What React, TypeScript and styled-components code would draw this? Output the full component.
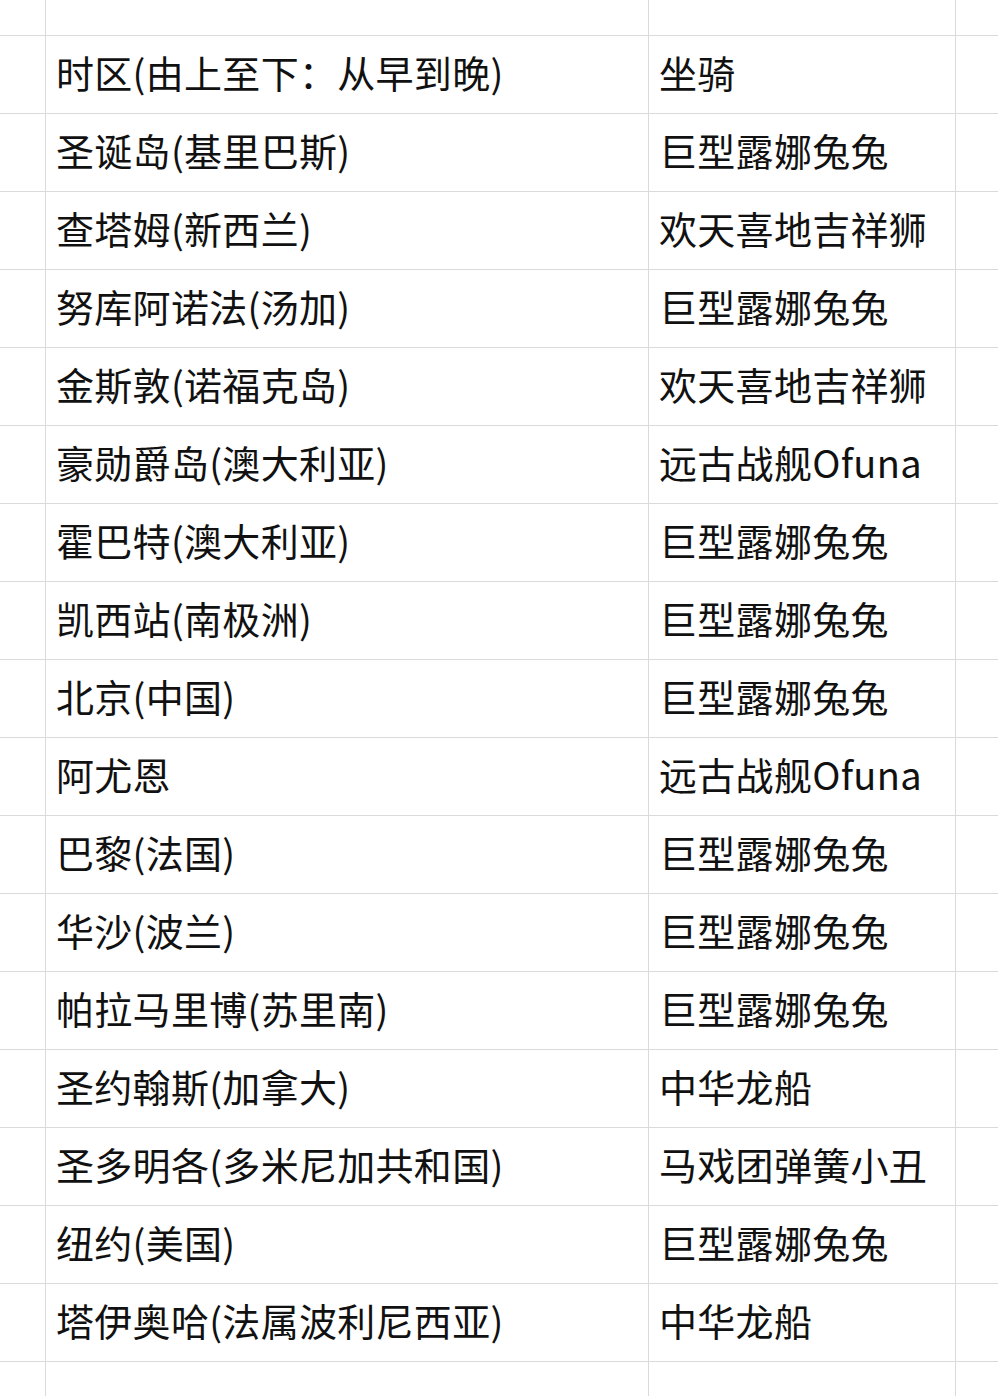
import React from "react";
import styled, { createGlobalStyle } from "styled-components";

const Global = createGlobalStyle`
  html, body { margin: 0; padding: 0; background: #ffffff; }
  body { font-family: "Noto Sans CJK SC", "Noto Sans", sans-serif; }
`;

const Sheet = styled.div`
  display: grid;
  grid-template-columns: 46px 603px 307px 42px;
  grid-template-rows: 36px repeat(17, 78px) 34px;
  width: 998px;
  height: 1397px;
  overflow: hidden;
  background: #ffffff;
`;

const Cell = styled.div<{ $noRight?: boolean; $noBottom?: boolean }>`
  box-sizing: border-box;
  border-right: ${(p) => (p.$noRight ? "none" : "1px solid #dadada")};
  border-bottom: ${(p) => (p.$noBottom ? "none" : "1px solid #dadada")};
  display: flex;
  align-items: center;
  padding-left: 10px;
  padding-bottom: 5px;
  font-size: 38px;
  letter-spacing: 0.3px;
  color: #111111;
  white-space: nowrap;
  overflow: hidden;
  line-height: 1;
`;

const rows: [string, string][] = [
  ["时区(由上至下：从早到晚)", "坐骑"],
  ["圣诞岛(基里巴斯)", "巨型露娜兔兔"],
  ["查塔姆(新西兰)", "欢天喜地吉祥狮"],
  ["努库阿诺法(汤加)", "巨型露娜兔兔"],
  ["金斯敦(诺福克岛)", "欢天喜地吉祥狮"],
  ["豪勋爵岛(澳大利亚)", "远古战舰Ofuna"],
  ["霍巴特(澳大利亚)", "巨型露娜兔兔"],
  ["凯西站(南极洲)", "巨型露娜兔兔"],
  ["北京(中国)", "巨型露娜兔兔"],
  ["阿尤恩", "远古战舰Ofuna"],
  ["巴黎(法国)", "巨型露娜兔兔"],
  ["华沙(波兰)", "巨型露娜兔兔"],
  ["帕拉马里博(苏里南)", "巨型露娜兔兔"],
  ["圣约翰斯(加拿大)", "中华龙船"],
  ["圣多明各(多米尼加共和国)", "马戏团弹簧小丑"],
  ["纽约(美国)", "巨型露娜兔兔"],
  ["塔伊奥哈(法属波利尼西亚)", "中华龙船"],
];

const allRows: [string, string][] = [["", ""], ...rows, ["", ""]];

export default function App() {
  return (
    <>
      <Global />
      <Sheet>
        {allRows.map(([a, b], i) => {
          const last = i === allRows.length - 1;
          return (
            <React.Fragment key={i}>
              <Cell $noBottom={last} />
              <Cell $noBottom={last}>{a}</Cell>
              <Cell $noBottom={last}>{b}</Cell>
              <Cell $noRight $noBottom={last} />
            </React.Fragment>
          );
        })}
      </Sheet>
    </>
  );
}
